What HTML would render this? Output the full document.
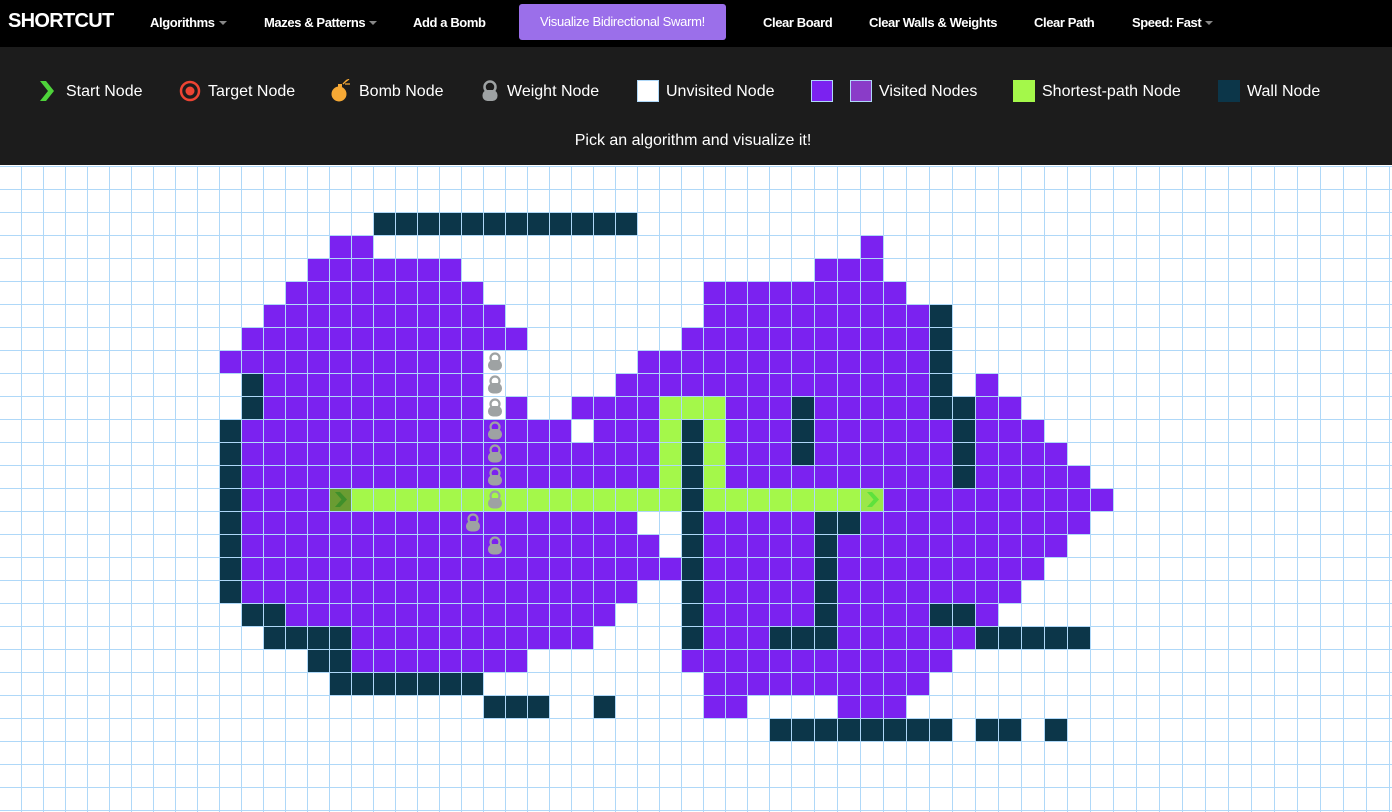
<!DOCTYPE html>
<html><head><meta charset="utf-8"><style>
*{margin:0;padding:0;box-sizing:border-box}
body{width:1392px;height:812px;overflow:hidden;background:#fff;font-family:"Liberation Sans",sans-serif;position:relative}
#nav{position:absolute;left:0;top:0;width:1392px;height:47px;background:#000;color:#fff}
#nav .i{position:absolute;top:15px;font-size:13px;font-weight:bold;letter-spacing:-0.4px;white-space:nowrap}
#nav .logo{position:absolute;left:8px;top:10px;font-size:20px;font-weight:bold;letter-spacing:-0.7px}
.car{display:inline-block;width:0;height:0;border-left:4px solid transparent;border-right:4px solid transparent;border-top:4px solid #888;margin-left:4px;vertical-align:2px}
#btn{position:absolute;left:519px;top:4px;width:207px;height:36px;background:#9b6fea;border-radius:3px;color:#fff;font-size:13px;text-align:center;line-height:36px;letter-spacing:-0.3px}
#leg{position:absolute;left:0;top:47px;width:1392px;height:118px;background:#1c1c1c;color:#fff;font-size:16px}
#leg .t{position:absolute;top:36px;white-space:nowrap}
#leg .sq{position:absolute;top:33px;width:22px;height:22px}
#pick{position:absolute;top:85px;left:0;width:1386px;text-align:center;font-size:16px}
#grid{position:absolute;left:0;top:166px;width:1392px;height:646px}
#lines1{position:absolute;left:0;top:166px;width:792px;height:646px;
background:repeating-linear-gradient(to right,transparent 0 21px,#afd8f8 21px 22px),repeating-linear-gradient(to bottom,#afd8f8 0 1px,transparent 1px 23px);pointer-events:none}
#lines2{position:absolute;left:792px;top:166px;width:600px;height:646px;
background:repeating-linear-gradient(to right,transparent 0 22px,#afd8f8 22px 23px),repeating-linear-gradient(to bottom,#afd8f8 0 1px,transparent 1px 23px);pointer-events:none}
.c{position:absolute;height:23px}
</style></head><body>
<div id="nav">
<div class="logo">SHORTCUT</div>
<div class="i" style="left:150px">Algorithms<span class="car"></span></div>
<div class="i" style="left:264px">Mazes &amp; Patterns<span class="car"></span></div>
<div class="i" style="left:413px">Add a Bomb</div>
<div id="btn">Visualize Bidirectional Swarm!</div>
<div class="i" style="left:763px">Clear Board</div>
<div class="i" style="left:869px">Clear Walls &amp; Weights</div>
<div class="i" style="left:1034px">Clear Path</div>
<div class="i" style="left:1132px">Speed: Fast<span class="car"></span></div>
</div>
<div id="leg">
<svg style="position:absolute;left:39px;top:33px" width="16" height="22" viewBox="0 0 16 22"><path d="M1 1 L7 1 L15 11 L7 21 L1 21 L9 11 Z" fill="#4ed33a"/></svg>
<div class="t" style="left:66px">Start Node</div>
<svg style="position:absolute;left:179px;top:33px" width="22" height="22"><circle cx="11" cy="11" r="9" fill="none" stroke="#ee4433" stroke-width="2.5"/><circle cx="11" cy="11" r="4.5" fill="#ee4433"/></svg>
<div class="t" style="left:208px">Target Node</div>
<svg style="position:absolute;left:330px;top:32px" width="22" height="24"><circle cx="9" cy="15" r="7.5" fill="#f6a935"/><rect x="8" y="5" width="4" height="4" fill="#f6a935"/><path d="M13 5 L17 1 M15 5 L20 5 M15 3 L19 0" stroke="#f6a935" stroke-width="1.3"/></svg>
<div class="t" style="left:359px">Bomb Node</div>
<svg style="position:absolute;left:479px;top:32px" width="22" height="24"><circle cx="11" cy="8" r="5.5" fill="none" stroke="#9ea2a3" stroke-width="2.5"/><rect x="3.5" y="11" width="15" height="11" rx="5" fill="#9ea2a3"/></svg>
<div class="t" style="left:507px">Weight Node</div>
<div class="sq" style="left:637px;background:#fff;border:1px solid #afd8f8"></div>
<div class="t" style="left:666px">Unvisited Node</div>
<div class="sq" style="left:811px;background:#7b22f0;border:1px solid #afd8f8"></div>
<div class="sq" style="left:850px;background:#8a3cc8;border:1px solid #afd8f8"></div>
<div class="t" style="left:879px">Visited Nodes</div>
<div class="sq" style="left:1013px;background:#a4f84a"></div>
<div class="t" style="left:1042px">Shortest-path Node</div>
<div class="sq" style="left:1218px;background:#0c3649"></div>
<div class="t" style="left:1247px">Wall Node</div>
<div id="pick">Pick an algorithm and visualize it!</div>
</div>
<div id="grid"></div>
<div id="lines1"></div>
<div id="lines2"></div>
<div id="icons" style="position:absolute;left:0;top:166px;width:1392px;height:646px"></div>
<script>
function X(c){return c<=36?22*c:792+23*(c-36);}
var P='#7b22f0',W='#0c3649',G='#a4f84a';
var rows={
2:[[W,17,28]],
3:[[P,15,16],[P,39,39]],
4:[[P,14,20],[P,37,39]],
5:[[P,13,21],[P,32,40]],
6:[[P,12,22],[P,32,41],[W,42,42]],
7:[[P,11,23],[P,31,41],[W,42,42]],
8:[[P,10,21],[P,29,41],[W,42,42]],
9:[[W,11,11],[P,12,21],[P,28,41],[W,42,42],[P,44,44]],
10:[[W,11,11],[P,12,21],[P,23,23],[P,26,29],[G,30,32],[P,33,35],[W,36,36],[P,37,41],[W,42,43],[P,44,45]],
11:[[W,10,10],[P,11,25],[P,27,29],[G,30,30],[W,31,31],[G,32,32],[P,33,35],[W,36,36],[P,37,42],[W,43,43],[P,44,46]],
12:[[W,10,10],[P,11,29],[G,30,30],[W,31,31],[G,32,32],[P,33,35],[W,36,36],[P,37,42],[W,43,43],[P,44,47]],
13:[[W,10,10],[P,11,29],[G,30,30],[W,31,31],[G,32,32],[P,33,42],[W,43,43],[P,44,48]],
14:[[W,10,10],[P,11,14],['#6a9c32',15,15],[G,16,30],[W,31,31],[G,32,38],['#9be84a',39,39],[P,40,49]],
15:[[W,10,10],[P,11,28],[W,31,31],[P,32,36],[W,37,38],[P,39,48]],
16:[[W,10,10],[P,11,29],[W,31,31],[P,32,36],[W,37,37],[P,38,47]],
17:[[W,10,10],[P,11,30],[W,31,31],[P,32,36],[W,37,37],[P,38,46]],
18:[[W,10,10],[P,11,28],[W,31,31],[P,32,36],[W,37,37],[P,38,45]],
19:[[W,11,12],[P,13,27],[W,31,31],[P,32,36],[W,37,37],[P,38,41],[W,42,43],[P,44,44]],
20:[[W,12,15],[P,16,26],[W,31,31],[P,32,34],[W,35,37],[P,38,43],[W,44,48]],
21:[[W,14,15],[P,16,23],[P,31,42]],
22:[[W,15,21],[P,32,41]],
23:[[W,22,24],[W,27,27],[P,32,33],[P,38,40]],
24:[[W,35,42],[W,44,45],[W,47,47]]};
var h='';
for(var r in rows){rows[r].forEach(function(s){h+='<div class="c" style="left:'+X(s[1])+'px;top:'+(r*23)+'px;width:'+(X(s[2]+1)-X(s[1]))+'px;background:'+s[0]+'"></div>';});}
document.getElementById('grid').innerHTML=h;
var wt=[[8,22],[9,22],[10,22],[11,22],[12,22],[13,22],[14,22],[15,21],[16,22]];
var ic='';
wt.forEach(function(w){ic+='<svg style="position:absolute;left:'+X(w[1])+'px;top:'+(w[0]*23)+'px" width="22" height="23"><circle cx="11" cy="8" r="4.5" fill="none" stroke="#9ea2a3" stroke-width="2.2"/><rect x="4" y="10" width="14" height="10.5" rx="5" fill="#9ea2a3"/></svg>';});
ic+='<svg style="position:absolute;left:330px;top:322px" width="22" height="23"><path d="M5 4 L10 4 L17 11.5 L10 19 L5 19 L11.5 11.5 Z" fill="#3f8f2a"/></svg>';
ic+='<svg style="position:absolute;left:'+X(39)+'px;top:322px" width="23" height="23"><path d="M6 4 L11 4 L18 11.5 L11 19 L6 19 L12.5 11.5 Z" fill="#5ee23c"/></svg>';
document.getElementById('icons').innerHTML=ic;
</script>
</body></html>
